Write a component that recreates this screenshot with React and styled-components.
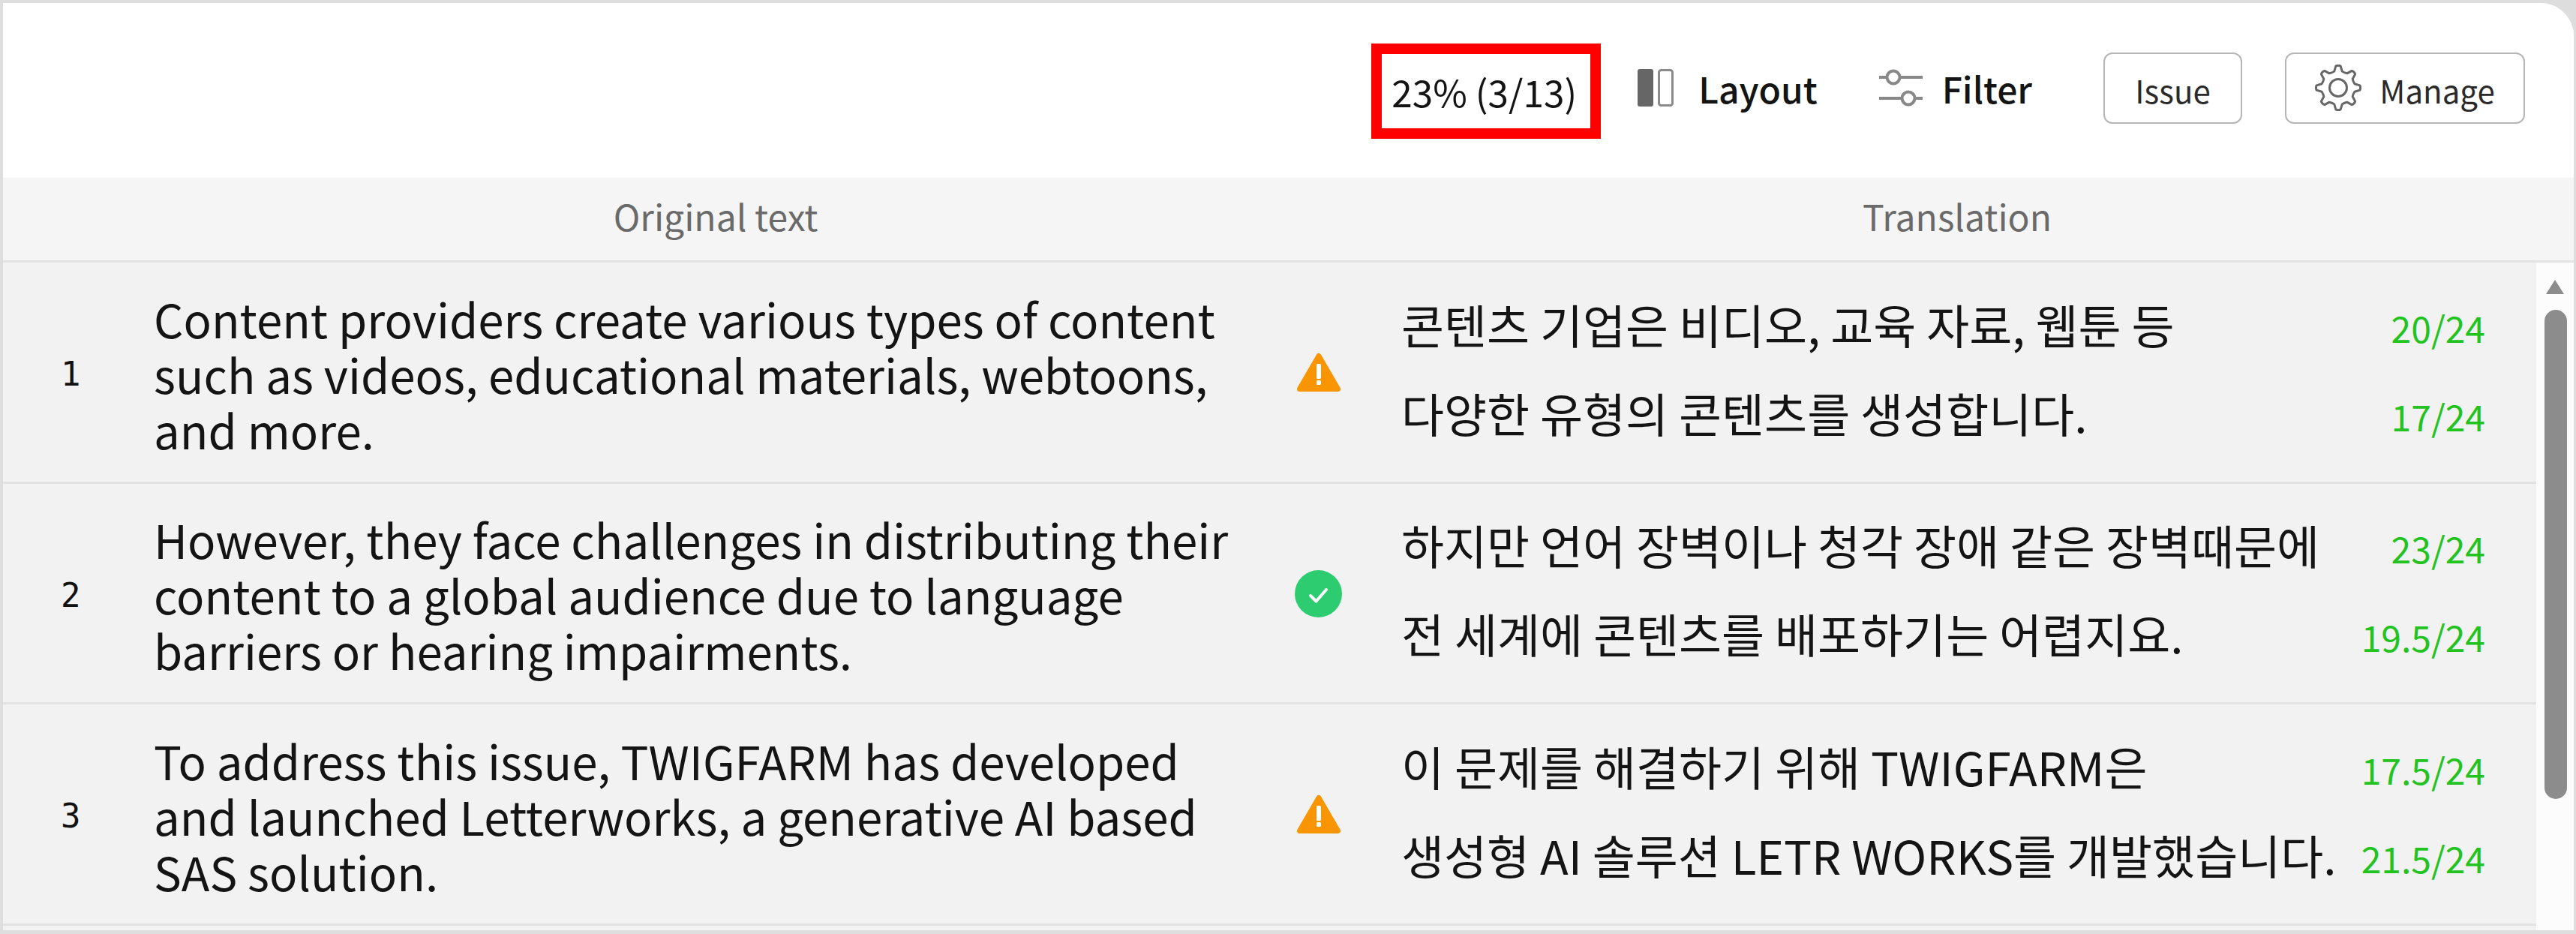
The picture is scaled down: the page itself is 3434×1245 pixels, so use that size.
import React from "react";
import styled, { createGlobalStyle } from "styled-components";

const Global = createGlobalStyle`
  html, body { margin: 0; padding: 0; background: #ddd; }
  body { font-family: "Noto Sans CJK KR", "Noto Sans", sans-serif; }
`;

const FONT = `"Noto Sans CJK KR", "Noto Sans", sans-serif`;

const Frame = styled.div`
  width: 3434px; height: 1245px; box-sizing: border-box;
  border: 4px solid #dedede; border-right-width: 3px; border-bottom-width: 5px;
  background: #fff; border-radius: 0 48px 0 0; overflow: hidden;
  display: flex; flex-direction: column; font-family: ${FONT};
`;
const Toolbar = styled.div`
  height: 233px; flex: none; box-sizing: border-box;
  display: flex; align-items: center; justify-content: flex-end;
  padding-right: 65px; padding-bottom: 7px; background: #fff; color: #111;
`;
const Progress = styled.div`
  box-sizing: border-box; width: 306px; height: 127px;
  border: 14px solid #fe0000; margin-top: 8px; padding-right: 5px;
  display: flex; align-items: center; justify-content: center;
  font-size: 49.5px; color: #141414; white-space: nowrap;
`;
const ToolItem = styled.div`
  display: flex; align-items: center; font-size: 48px; font-weight: 500; color: #141414;
  margin-left: ${p => p.$ml}px; gap: ${p => p.$gap}px;
`;
const OutlineButton = styled.div`
  box-sizing: border-box; height: 95px; width: ${p => p.$w}px; margin-left: ${p => p.$ml}px;
  border: 2px solid #b5b5b5; border-radius: 12px; background: #fff;
  display: flex; align-items: center; justify-content: center; gap: 24px;
  font-size: 42px; color: #2a2a2a;
`;
const ButtonLabel = styled.span`position: relative; top: 2px;`;
const HeaderRow = styled.div`
  height: 113px; flex: none; box-sizing: border-box; background: #f5f5f5;
  border-bottom: 3px solid #e3e3e3; padding-bottom: 11px;
  display: flex; align-items: center; font-size: 48px; color: #6a6a6a;
`;
const HeaderCell = styled.div`
  text-align: center; width: ${p => p.$w}px; flex: none;
`;
const Body = styled.div`flex: 1; display: flex; min-height: 0;`;
const RowList = styled.div`flex: 1; min-width: 0; background: #f2f2f2;`;
const Row = styled.div`
  height: 294.5px; box-sizing: border-box; border-bottom: 3px solid #e2e2e2;
  display: flex; align-items: center;
`;
const Num = styled.div`
  width: 201px; flex: none; box-sizing: border-box; padding-left: 77px; padding-top: 6px;
  font-family: "DejaVu Sans Mono", monospace; font-size: 44px; color: #111;
`;
const Source = styled.div`
  width: 1521px; flex: none; font-size: 61.8px; line-height: 74px; color: #141414; padding-top: 4px;
`;
const StatusCell = styled.div`
  width: 144px; flex: none; display: flex; justify-content: flex-start; padding-top: 2px;
`;
const Targets = styled.div`flex: 1; min-width: 0; display: flex; flex-direction: column;`;
const TargetLine = styled.div`
  height: 118px; display: flex; align-items: center; justify-content: space-between;
  padding-right: 68px;
`;
const TargetText = styled.div`font-size: 62px; color: #141414; white-space: nowrap; margin-left: -2px; margin-top: -10px;`;
const Count = styled.div`font-size: 48px; color: #22c31e; white-space: nowrap; margin-top: -2px;`;
const Scrollbar = styled.div`
  width: 50px; flex: none; background: #fcfcfc; position: relative;
`;
const Arrow = styled.div`
  position: absolute; left: 13px; top: 23px; width: 0; height: 0;
  border-left: 12px solid transparent; border-right: 12px solid transparent;
  border-bottom: 19px solid #8c8c8c;
`;
const Thumb = styled.div`
  position: absolute; left: 11px; top: 63px; width: 30px; height: 652px;
  background: #8c8c8c; border-radius: 15px;
`;
const WarnSlot = styled.span`display: flex; margin-left: 3px;`;

const LayoutIcon = () => (
  <svg width="48" height="50" viewBox="0 0 48 50">
    <rect x="0" y="0" width="21" height="50" rx="3" fill="#666" />
    <rect x="28.5" y="1.5" width="18" height="47" rx="3" fill="#fff" stroke="#8a8a8a" strokeWidth="3" />
  </svg>
);
const FilterIcon = () => (
  <svg width="58" height="50" viewBox="0 0 58 50" fill="none" stroke="#888" strokeWidth="4">
    <path d="M0 11h10M28 11h30M0 39h30M48 39h10" />
    <circle cx="19" cy="11" r="8.5" />
    <circle cx="39" cy="39" r="8.5" />
  </svg>
);

// Outline of an eight-toothed cog, built in polar steps around the centre.
const gearPath = (() => {
  const teeth = 8, ro = 29, ri = 22.5, c = 31;
  const at = (r, a) => `${(c + r * Math.sin(a)).toFixed(2)} ${(c - r * Math.cos(a)).toFixed(2)}`;
  const step = (2 * Math.PI) / teeth;
  let d = "";
  for (let i = 0; i < teeth; i++) {
    const a = i * step;
    d += `${i ? "L" : "M"}${at(ri, a - step * 0.3)} L${at(ro, a - step * 0.14)} `;
    d += `Q${at(ro + 1.5, a)} ${at(ro, a + step * 0.14)} L${at(ri, a + step * 0.3)} `;
    d += `Q${at(ri - 1, a + step * 0.5)} ${at(ri, a + step * 0.7)} `;
  }
  return d + "Z";
})();
const GearIcon = () => (
  <svg width="62" height="62" viewBox="0 0 62 62" fill="none" stroke="#666" strokeWidth="3" strokeLinejoin="round">
    <path d={gearPath} />
    <circle cx="31" cy="31" r="11.5" />
  </svg>
);
const WarnIcon = () => (
  <WarnSlot>
    <svg width="58" height="53" viewBox="0 0 58 53">
      <path d="M29 4.5 L54.5 48.5 H3.5 Z" fill="#f99500" stroke="#f99500" strokeWidth="7" strokeLinejoin="round" />
      <rect x="26" y="15" width="6" height="20" rx="1.5" fill="#fff" />
      <rect x="26" y="37" width="6" height="6" rx="1.5" fill="#fff" />
    </svg>
  </WarnSlot>
);
const OkIcon = () => (
  <svg width="63" height="63" viewBox="0 0 63 63">
    <circle cx="31.5" cy="31.5" r="31.5" fill="#2ecc71" />
    <path d="M21 34l7.5 7.5L42 26" fill="none" stroke="#fff" strokeWidth="4" strokeLinecap="round" strokeLinejoin="round" />
  </svg>
);

const rows = [
  { n: 1, src: ["Content providers create various types of content", "such as videos, educational materials, webtoons,", "and more."], status: "warn",
    t: [["콘텐츠 기업은 비디오, 교육 자료, 웹툰 등", "20/24"], ["다양한 유형의 콘텐츠를 생성합니다.", "17/24"]] },
  { n: 2, src: ["However, they face challenges in distributing their", "content to a global audience due to language", "barriers or hearing impairments."], status: "ok",
    t: [["하지만 언어 장벽이나 청각 장애 같은 장벽때문에", "23/24"], ["전 세계에 콘텐츠를 배포하기는 어렵지요.", "19.5/24"]] },
  { n: 3, src: ["To address this issue, TWIGFARM has developed", "and launched Letterworks, a generative AI based", "SAS solution."], status: "warn",
    t: [["이 문제를 해결하기 위해 TWIGFARM은", "17.5/24"], ["생성형 AI 솔루션 LETR WORKS를 개발했습니다.", "21.5/24"]] },
];

export default function App() {
  return (
    <>
      <Global />
      <Frame>
        <Toolbar>
          <Progress>23% (3/13)</Progress>
          <ToolItem $ml={49} $gap={33}><LayoutIcon />Layout</ToolItem>
          <ToolItem $ml={82} $gap={26}><FilterIcon />Filter</ToolItem>
          <OutlineButton $w={185} $ml={95}><ButtonLabel>Issue</ButtonLabel></OutlineButton>
          <OutlineButton $w={320} $ml={57}><GearIcon /><ButtonLabel>Manage</ButtonLabel></OutlineButton>
        </Toolbar>
        <HeaderRow>
          <HeaderCell $w={1900}>Original text</HeaderCell>
          <HeaderCell $w={1410}>Translation</HeaderCell>
        </HeaderRow>
        <Body>
          <RowList>
            {rows.map(r => (
              <Row key={r.n}>
                <Num>{r.n}</Num>
                <Source>{r.src.map(l => <div key={l}>{l}</div>)}</Source>
                <StatusCell>{r.status === "warn" ? <WarnIcon /> : <OkIcon />}</StatusCell>
                <Targets>
                  {r.t.map(([a, b]) => (
                    <TargetLine key={a}><TargetText>{a}</TargetText><Count>{b}</Count></TargetLine>
                  ))}
                </Targets>
              </Row>
            ))}
          </RowList>
          <Scrollbar><Arrow /><Thumb /></Scrollbar>
        </Body>
      </Frame>
    </>
  );
}
